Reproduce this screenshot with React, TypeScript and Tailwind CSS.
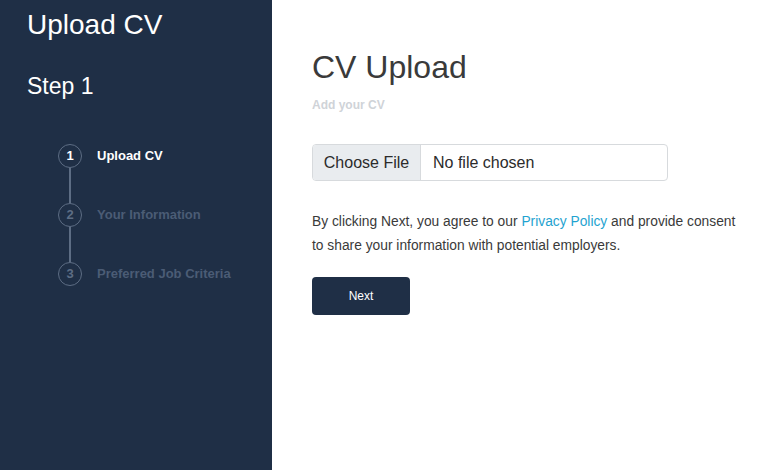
import React from "react";

export default function App() {
  const steps = [
    { n: 1, label: "Upload CV", active: true },
    { n: 2, label: "Your Information", active: false },
    { n: 3, label: "Preferred Job Criteria", active: false },
  ];
  return (
    <div
      className="flex w-[780px] h-[470px] overflow-hidden bg-white"
      style={{ fontFamily: '"Liberation Sans", Arial, sans-serif' }}
    >
      <aside className="w-[272px] shrink-0 bg-[#1f2f46] text-white pl-[27px]">
        <h1 className="text-[28px] leading-[32px] mt-[9px]">Upload CV</h1>
        <h2 className="text-[23px] leading-[28px] mt-[31px]">Step 1</h2>
        <div className="mt-[44px] pl-[31px]">
          {steps.map((s, i) => (
            <div key={s.n} className="flex items-start">
              <div className="flex flex-col items-center w-[24px]">
                <div
                  className={`w-[24px] h-[24px] rounded-full border border-[#5d6d84] flex items-center justify-center text-[13px] font-bold ${
                    s.active ? "text-white" : "text-[#5d6d84]"
                  }`}
                >
                  {s.n}
                </div>
                {i < steps.length - 1 && <div className="w-[2px] h-[35px] bg-[#5d6d84]" />}
              </div>
              <div
                className={`ml-[15px] text-[13px] font-bold leading-[24px] ${
                  s.active ? "text-white" : "text-[#4b5c75]"
                }`}
              >
                {s.label}
              </div>
            </div>
          ))}
        </div>
      </aside>
      <main className="flex-1 pl-[40px] pt-[48px]">
        <h1 className="text-[32px] leading-[38px] text-[#3a3a3a]">CV Upload</h1>
        <p className="text-[12px] font-bold text-[#cfd3d8] mt-[10px]">Add your CV</p>
        <div className="mt-[30px] flex w-[356px] h-[37px] border border-[#d7dadd] rounded-[4px] overflow-hidden text-[16px] text-[#2b2b2b]">
          <div className="w-[108px] bg-[#e9ecef] border-r border-[#d7dadd] flex items-center justify-center">
            Choose File
          </div>
          <div className="flex items-center pl-[12px]">No file chosen</div>
        </div>
        <p className="mt-[29px] text-[13.8px] leading-[24px] text-[#3a3a3a] w-[430px]">
          By clicking Next, you agree to our{" "}
          <a className="text-[#1fa3d0]">Privacy Policy</a> and provide consent to share your
          information with potential employers.
        </p>
        <button className="mt-[19px] w-[98px] h-[38px] rounded-[4px] bg-[#1f2f46] text-white text-[12px]">
          Next
        </button>
      </main>
    </div>
  );
}
